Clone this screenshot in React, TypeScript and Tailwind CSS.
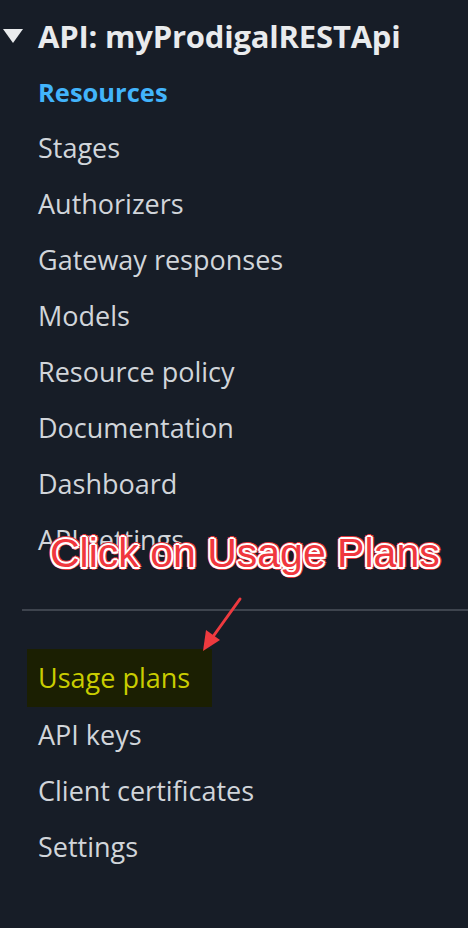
const topItems = [
  "Stages",
  "Authorizers",
  "Gateway responses",
  "Models",
  "Resource policy",
  "Documentation",
  "Dashboard",
  "API settings",
];

const bottomItems = ["API keys", "Client certificates", "Settings"];

export default function App() {
  return (
    <div
      className="relative w-[468px] h-[928px] overflow-hidden bg-[#171d27] text-[#d1d5da]"
      style={{ fontFamily: '"Open Sans", "Noto Sans", sans-serif' }}
    >
      <div className="pt-2">
        {/* header */}
        <div className="flex items-center h-14">
          <svg width="20" height="15" viewBox="0 0 20 15" className="ml-[3px] mr-[15px]">
            <polygon points="0,0 20,0 10,14" fill="#e9ebed" />
          </svg>
          <span className="text-[31px] font-bold text-[#e9ebed] tracking-[-0.2px] whitespace-nowrap">
            API: myProdigalRESTApi
          </span>
        </div>

        <div className="flex items-center h-14 pt-px pl-[38px] text-[25.5px] font-bold text-[#42b4fb]">
          Resources
        </div>
        {topItems.map((item) => (
          <div key={item} className="flex items-center h-14 pt-px pl-[38px] text-[27px]">
            {item}
          </div>
        ))}

        <div className="mt-[41px] ml-[22px] h-[2px] bg-[#3e444e]" />

        <div className="mt-[38px] ml-[27px] flex items-center w-[185px] h-[58px] pl-[11px] pt-px bg-[#1b1f02] text-[27px] text-[#c9cd00]">
          Usage plans
        </div>
        {bottomItems.map((item) => (
          <div key={item} className="flex items-center h-14 pt-px pl-[38px] text-[27px]">
            {item}
          </div>
        ))}
      </div>

      {/* annotation */}
      <span
        className="absolute left-[50px] top-[533px] text-[41px] leading-none text-[#f0373e] whitespace-nowrap"
        style={{
          fontFamily: '"Liberation Sans", Arial, sans-serif',
          textShadow:
            "2px 0 0 #fff, -2px 0 0 #fff, 0 2px 0 #fff, 0 -2px 0 #fff, 1.5px 1.5px 0 #fff, -1.5px 1.5px 0 #fff, 1.5px -1.5px 0 #fff, -1.5px -1.5px 0 #fff, 3px 0 0 #e0353b, -3px 0 0 #e0353b, 0 3px 0 #e0353b, 0 -3px 0 #e0353b, 2.2px 2.2px 0 #e0353b, -2.2px 2.2px 0 #e0353b, 2.2px -2.2px 0 #e0353b, -2.2px -2.2px 0 #e0353b",
        }}
      >
        Click on Usage Plans
      </span>
      <svg className="absolute left-0 top-0" width="468" height="928">
        <line x1="240" y1="599" x2="212" y2="638" stroke="#ee3a3f" strokeWidth="3" strokeLinecap="round" />
        <polygon points="203,651 206,630 220,640" fill="#ee3a3f" />
      </svg>
    </div>
  );
}
